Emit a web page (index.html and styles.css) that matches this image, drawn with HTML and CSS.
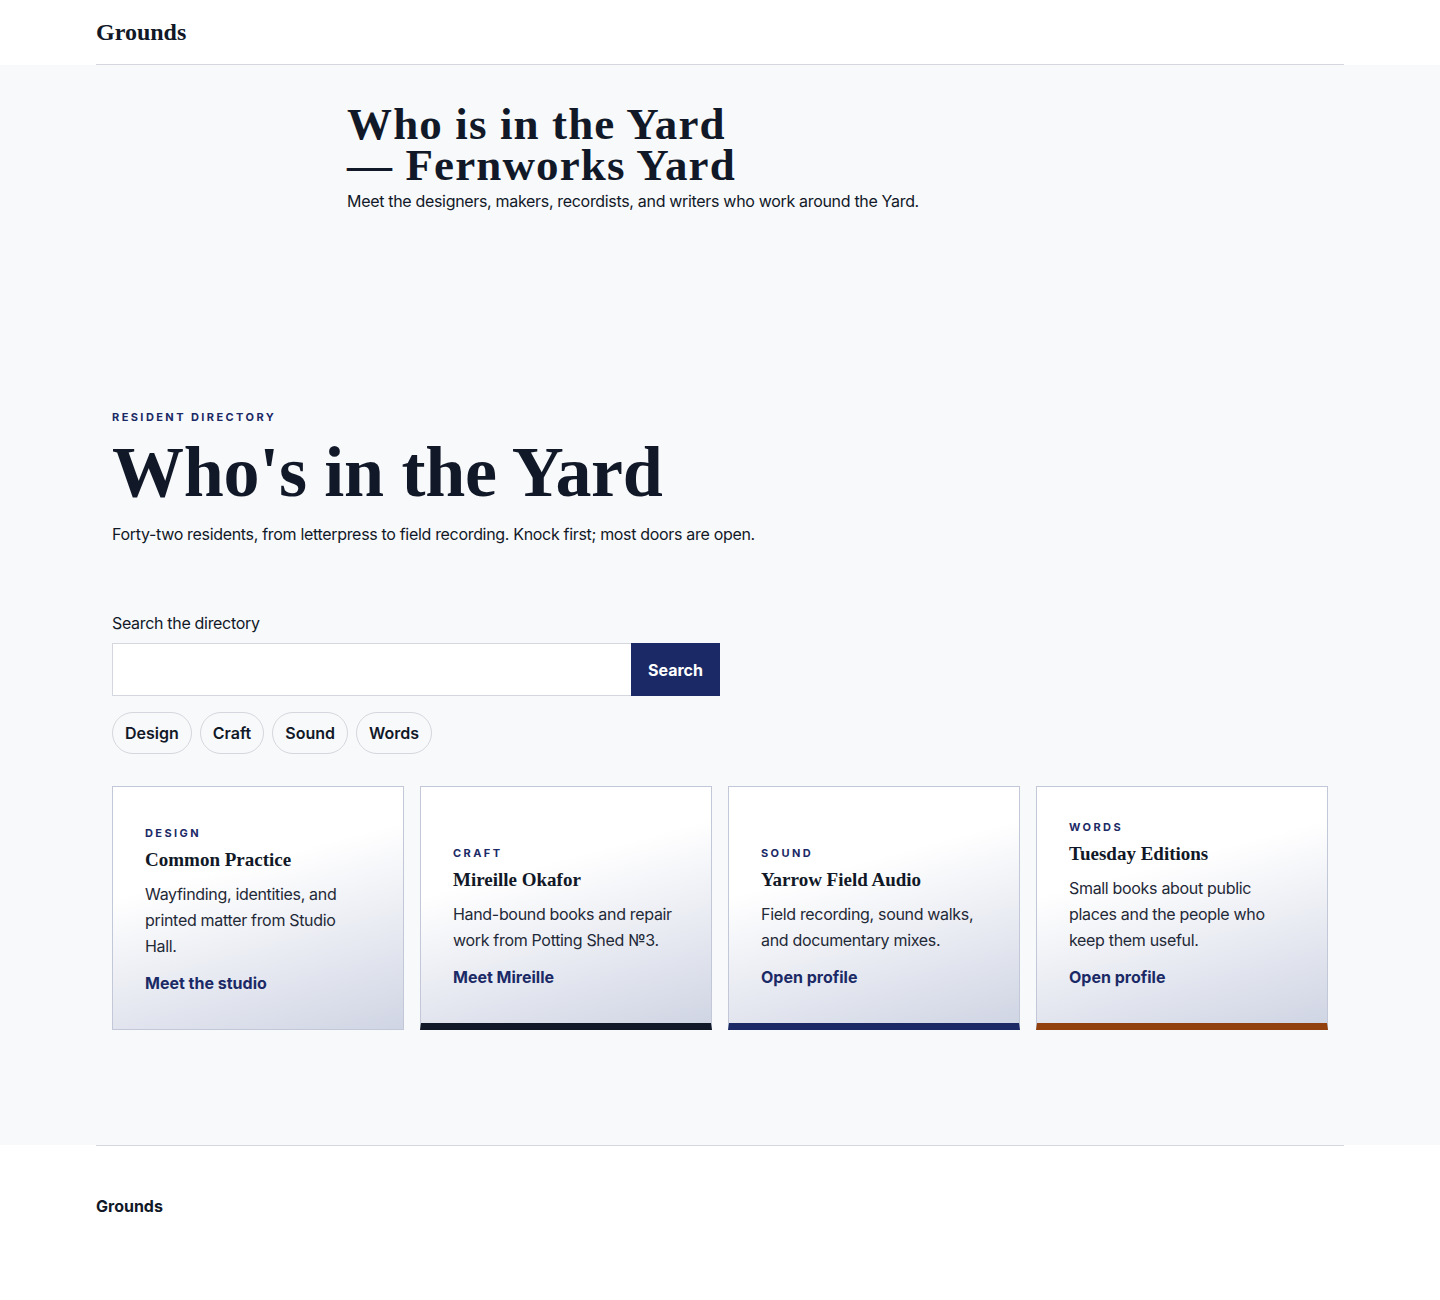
FILE: index.html
```html
<!DOCTYPE html>
<html lang="en">
<head>
  <meta charset="UTF-8">
  <meta name="viewport" content="width=device-width, initial-scale=1.0">
  <title>Who's in the Yard — Grounds</title>
  <link rel="stylesheet" href="styles.css">
</head>
<body>
  <header class="site-header">
    <div class="container header-inner">
      <a class="brand" href="#">Grounds</a>
    </div>
  </header>

  <main class="page">
    <section class="hero">
      <h1 class="hero-title">Who is in the Yard — Fernworks Yard</h1>
      <p class="hero-sub">Meet the designers, makers, recordists, and writers who work around the Yard.</p>
    </section>

    <section class="container directory">
      <p class="eyebrow">Resident directory</p>
      <h2 class="directory-title">Who's in the Yard</h2>
      <p class="lead">Forty-two residents, from letterpress to field recording. Knock first; most doors are open.</p>

      <form class="search" onsubmit="return false">
        <label for="q">Search the directory</label>
        <div class="search-row">
          <input id="q" type="text" name="q">
          <button type="submit">Search</button>
        </div>
      </form>

      <div class="chips">
        <button class="chip">Design</button>
        <button class="chip">Craft</button>
        <button class="chip">Sound</button>
        <button class="chip">Words</button>
      </div>

      <div class="cards">
        <article class="card">
          <p class="eyebrow">Design</p>
          <h3>Common Practice</h3>
          <p class="card-text">Wayfinding, identities, and printed matter from Studio Hall.</p>
          <a href="#">Meet the studio</a>
        </article>
        <article class="card card-dark">
          <p class="eyebrow">Craft</p>
          <h3>Mireille Okafor</h3>
          <p class="card-text">Hand-bound books and repair work from Potting Shed №3.</p>
          <a href="#">Meet Mireille</a>
        </article>
        <article class="card card-navy">
          <p class="eyebrow">Sound</p>
          <h3>Yarrow Field Audio</h3>
          <p class="card-text">Field recording, sound walks, and documentary mixes.</p>
          <a href="#">Open profile</a>
        </article>
        <article class="card card-rust">
          <p class="eyebrow">Words</p>
          <h3>Tuesday Editions</h3>
          <p class="card-text">Small books about public places and the people who keep them useful.</p>
          <a href="#">Open profile</a>
        </article>
      </div>
    </section>
  </main>

  <footer class="container site-footer">
    <p class="footer-brand">Grounds</p>
  </footer>
</body>
</html>
```

FILE: styles.css
```css
* {
  box-sizing: border-box;
}

body {
  margin: 0;
  background: #fff;
  color: #111827;
  font-family: Inter, "Liberation Sans", sans-serif;
  font-size: 16px;
  line-height: 24px;
  letter-spacing: -0.02em;
}

p, h1, h2, h3 {
  margin: 0;
}

.container {
  width: 1248px;
  margin-left: auto;
  margin-right: auto;
}

/* header */
.header-inner {
  height: 65px;
  display: flex;
  align-items: center;
  border-bottom: 1px solid #d4d7dd;
  padding-bottom: 1px;
}

.brand {
  font-family: "Liberation Serif", serif;
  font-weight: 700;
  font-size: 24px;
  letter-spacing: 0;
  color: #111827;
  text-decoration: none;
}

.page {
  background: #f8f9fb;
}

/* hero */
.hero {
  width: 746px;
  margin: 0 auto;
  padding: 39px 0 96px;
}

.hero-title {
  font-family: "Liberation Serif", serif;
  font-size: 45px;
  line-height: 41px;
  font-weight: 700;
  letter-spacing: 0.025em;
  max-width: 400px;
}

.hero-sub {
  margin-top: 3px;
}

/* directory */
.directory {
  padding: 100px 16px 115px;
}

.eyebrow {
  font-size: 11px;
  line-height: 16px;
  font-weight: 700;
  letter-spacing: 0.22em;
  text-transform: uppercase;
  color: #1b2a66;
}

.directory-title {
  margin-top: 8px;
  font-family: "Liberation Serif", serif;
  font-size: 72px;
  line-height: 79px;
  font-weight: 700;
  letter-spacing: -0.004em;
}

.lead {
  margin-top: 10px;
}

.search {
  margin-top: 65px;
}

.search label {
  display: block;
  margin-bottom: 8px;
}

.search-row {
  display: flex;
}

.search-row input {
  width: 519px;
  height: 53px;
  border: 1px solid #d4d7dd;
  border-right: 0;
  background: #fff;
  font: inherit;
  padding: 0 14px;
}

.search-row button {
  width: 89px;
  height: 53px;
  border: 0;
  background: #1b2a66;
  color: #fff;
  font: inherit;
  font-weight: 700;
  letter-spacing: 0;
}

.chips {
  display: flex;
  gap: 8px;
  margin-top: 16px;
}

.chip {
  height: 42px;
  padding: 0 12px;
  border: 1px solid #d4d7dd;
  border-radius: 21px;
  background: transparent;
  color: #111827;
  font: inherit;
  font-weight: 600;
  letter-spacing: 0;
}

/* cards */
.cards {
  display: grid;
  grid-template-columns: repeat(4, 1fr);
  gap: 16px;
  margin-top: 32px;
}

.card {
  display: flex;
  flex-direction: column;
  justify-content: flex-end;
  padding: 32px 34px 34px 32px;
  border: 1px solid #c3c8d8;
  background: linear-gradient(165deg, #fff 35%, #d0d5e4 100%);
}

.card h3 {
  margin-top: 6px;
  font-family: "Liberation Serif", serif;
  font-size: 19px;
  line-height: 25px;
  font-weight: 700;
  letter-spacing: 0;
}

.card-text {
  margin-top: 9px;
  line-height: 26px;
  color: #1f2937;
}

.card a {
  margin-top: 12px;
  color: #1b2a66;
  font-weight: 700;
  letter-spacing: 0;
  text-decoration: none;
}

.card-dark {
  border-bottom: 7px solid #111827;
}

.card-navy {
  border-bottom: 7px solid #1b2a66;
}

.card-rust {
  border-bottom: 7px solid #92400e;
}

/* footer */
.site-footer {
  border-top: 1px solid #d4d7dd;
  padding: 48px 0 48px;
}

.footer-brand {
  font-weight: 700;
  letter-spacing: 0;
}
```
